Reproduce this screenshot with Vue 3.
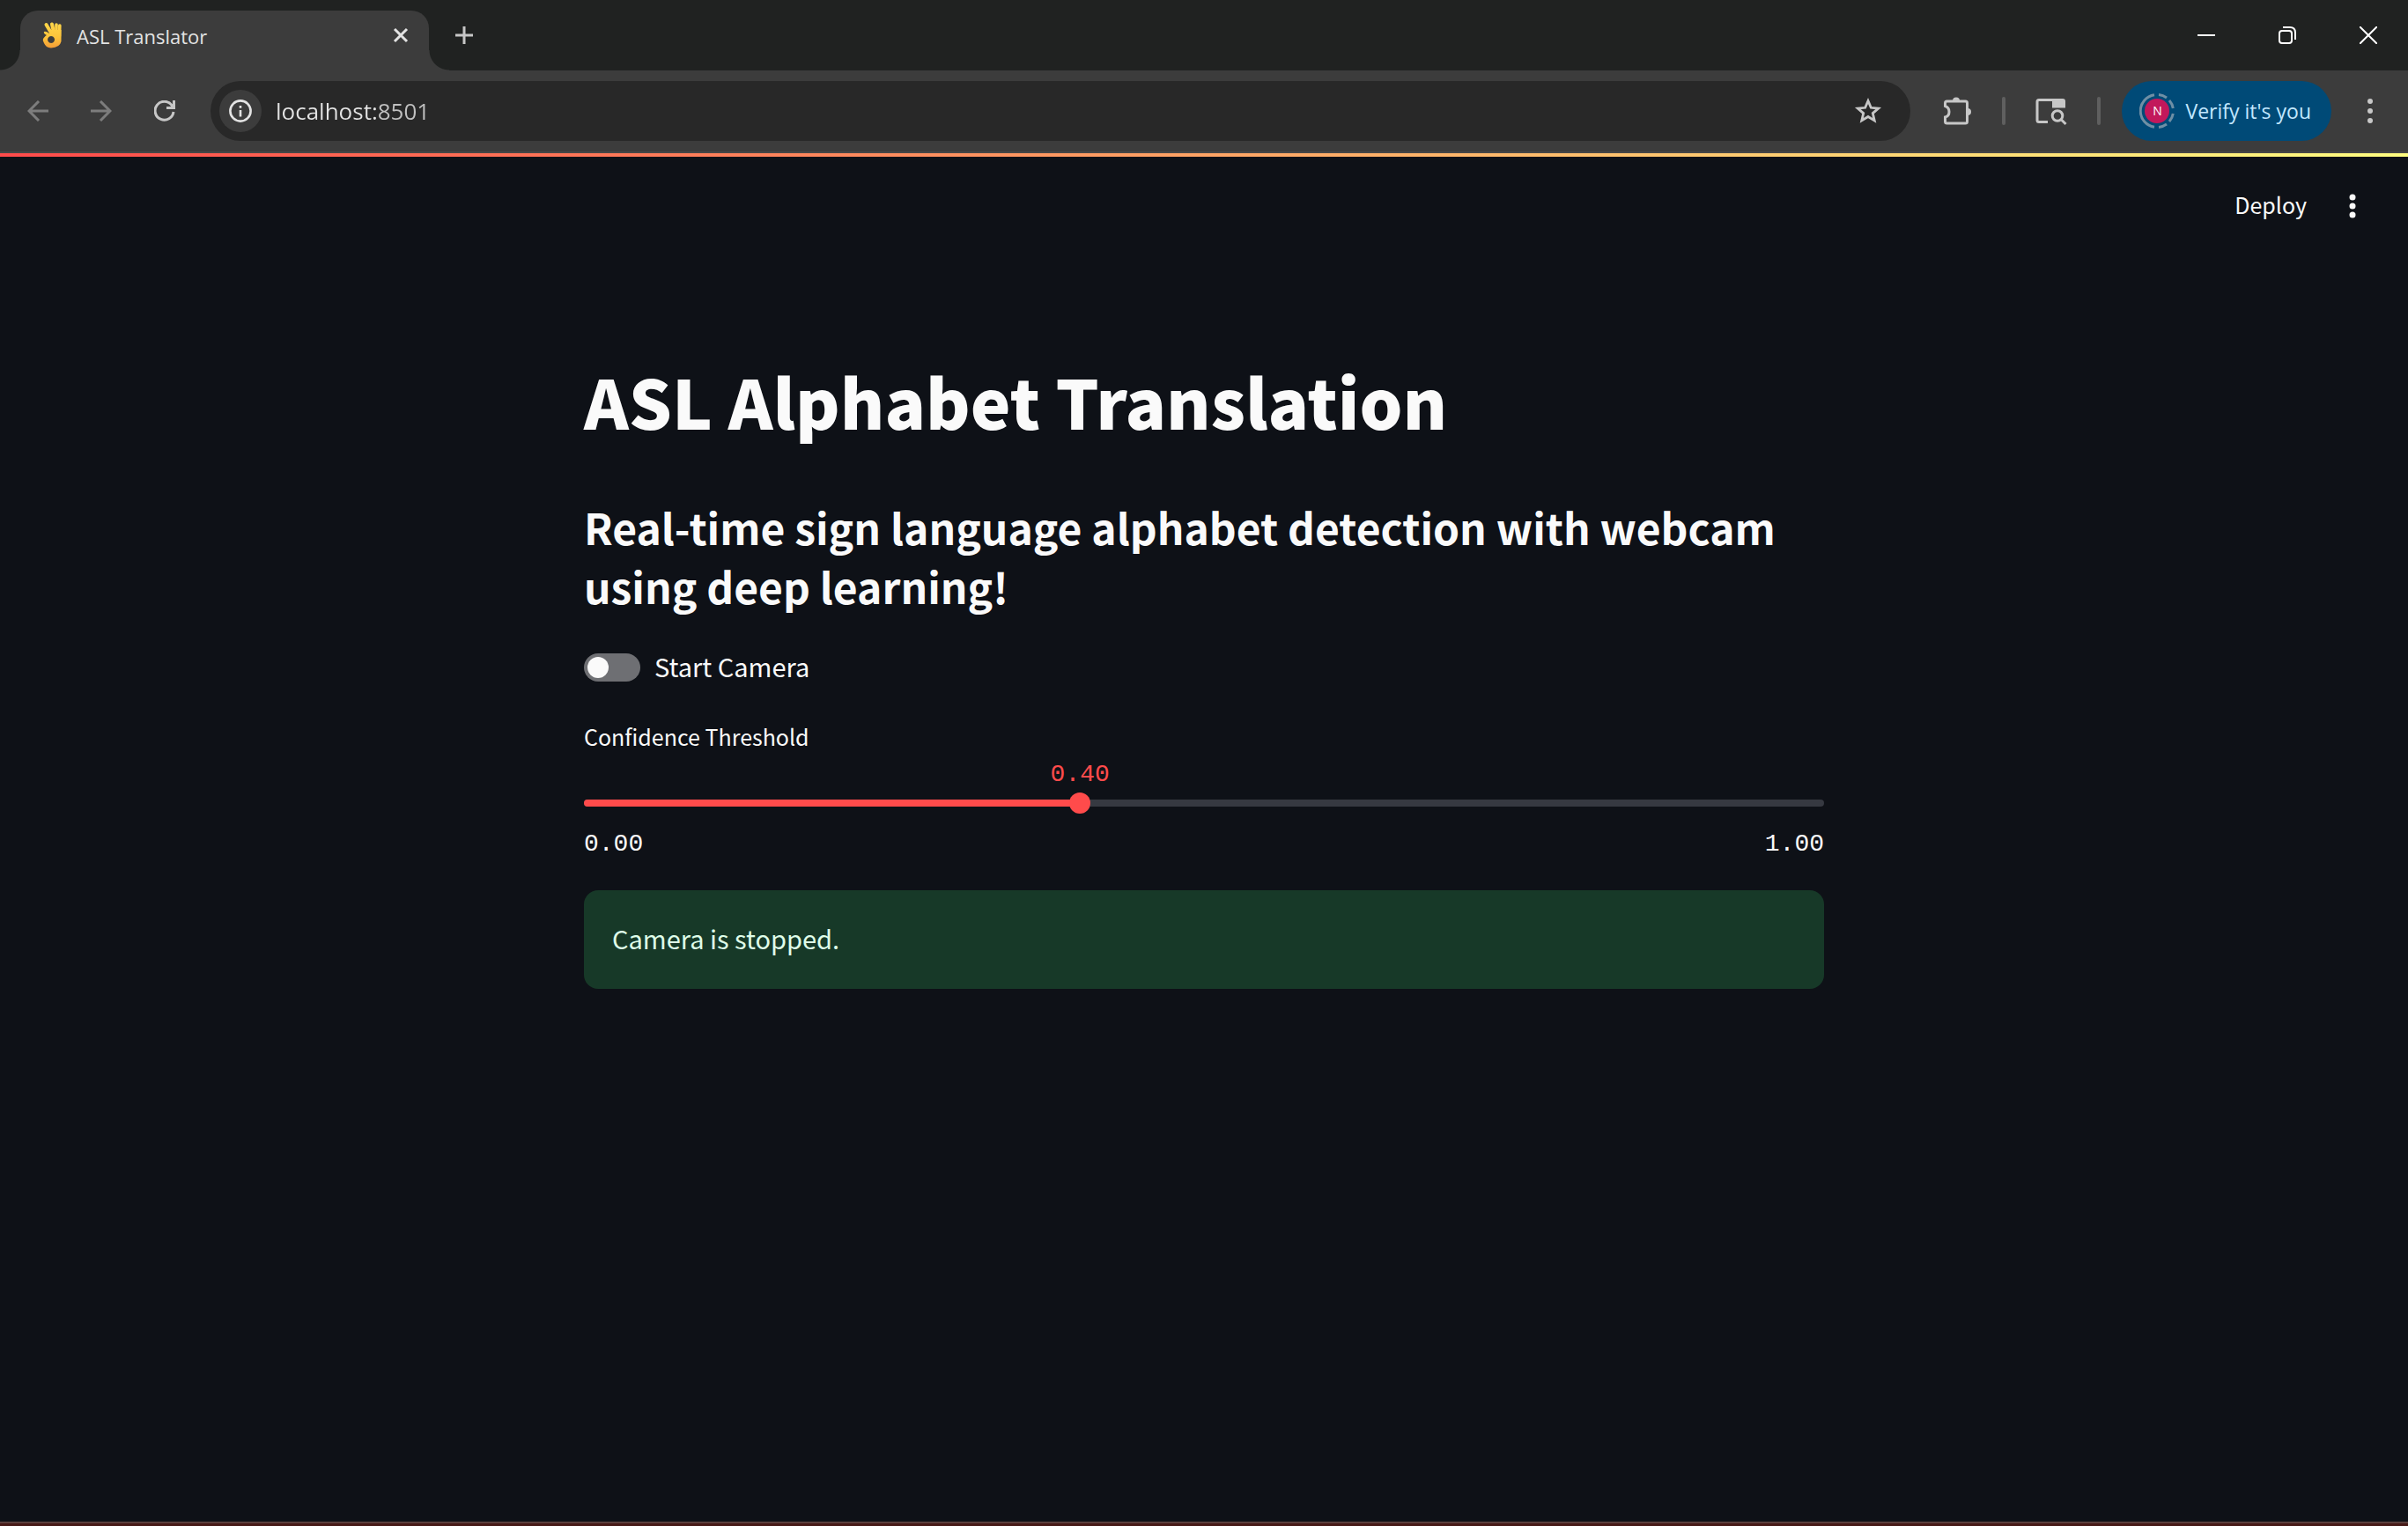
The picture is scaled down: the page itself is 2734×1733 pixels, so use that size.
<script setup>
import { ref, computed } from 'vue'

const url = ref('localhost:8501')
const camera = ref(false)
const threshold = ref(0.4)
const percent = computed(() => threshold.value * 100 + '%')
</script>

<template>
  <div class="window">
    <header class="tabstrip">
      <div class="tab">
        <svg class="favicon" viewBox="0 0 22 30" aria-hidden="true">
          <defs>
            <linearGradient id="skin" gradientUnits="userSpaceOnUse" x1="0" y1="0" x2="0" y2="30">
              <stop offset="0" stop-color="#ffd84a" />
              <stop offset="0.6" stop-color="#fcc23a" />
              <stop offset="1" stop-color="#f39a36" />
            </linearGradient>
          </defs>
          <g fill="none" stroke="url(#skin)" stroke-linecap="round">
            <path d="M4.500 3 L11 14" stroke-width="4" />
            <path d="M11 2.500 L13.500 14" stroke-width="4" />
            <path d="M16 3 L16 14" stroke-width="3.600" />
            <path d="M19.800 4 L19.500 16" stroke-width="3.600" />
          </g>
          <path fill="url(#skin)" fill-rule="evenodd" d="M2 11 Q4 10 8 13 L10 9 H21.500 V22 Q20 29 10 29.500 Q4 29 2 24 Q0 21 1 19 Q4 15 5 15 Q1 13 2 11 Z M10 16 A4 4 0 1 0 10.100 16 Z" />
        </svg>
        <span class="tab-title">ASL Translator</span>
        <button class="plain tab-close" aria-label="Close tab">
          <svg width="18" height="18" viewBox="0 0 18 18"><path d="M2 2 L16 16 M16 2 L2 16" stroke="#e3e3e3" stroke-width="3" /></svg>
        </button>
      </div>
      <button class="plain new-tab" aria-label="New tab">
        <svg width="20" height="20" viewBox="0 0 20 20"><path d="M10 0 V20 M0 10 H20" stroke="#c7c7c7" stroke-width="3" /></svg>
      </button>
      <div class="controls">
        <button class="plain" aria-label="Minimize">
          <svg width="20" height="20" viewBox="0 0 20 20"><path d="M0 10 H20" stroke="#fff" stroke-width="2" /></svg>
        </button>
        <button class="plain" aria-label="Restore">
          <svg width="20" height="20" viewBox="0 0 20 20" fill="none" stroke="#fff" stroke-width="2">
            <rect x="1" y="5" width="14" height="14" rx="3" />
            <path d="M5 1 H13 Q19 1 19 7 V15" />
          </svg>
        </button>
        <button class="plain" aria-label="Close">
          <svg width="20" height="20" viewBox="0 0 20 20"><path d="M0 0 L20 20 M20 0 L0 20" stroke="#fff" stroke-width="2" /></svg>
        </button>
      </div>
    </header>

    <nav class="toolbar">
      <div class="nav">
        <button class="plain" aria-label="Back">
          <svg width="24" height="24" viewBox="0 0 24 24" fill="none" stroke="#7d7d7d" stroke-width="3"><path d="M24 12 H2 M13 1 L2 12 L13 23" /></svg>
        </button>
        <button class="plain" aria-label="Forward">
          <svg width="24" height="24" viewBox="0 0 24 24" fill="none" stroke="#7d7d7d" stroke-width="3"><path d="M0 12 H22 M11 1 L22 12 L11 23" /></svg>
        </button>
        <button class="plain" aria-label="Reload">
          <svg width="24" height="24" viewBox="0 0 24 24" fill="none" stroke="#c7c7c7" stroke-width="3"><path d="M22 13 A10.500 10.500 0 1 1 20 5.500 L22 8 M22.500 0 V8.500 H14" /></svg>
        </button>
      </div>
      <div class="omnibox">
        <button class="plain info" aria-label="Site information">
          <svg width="26" height="26" viewBox="0 0 26 26" fill="none" stroke="#e3e3e3" stroke-width="2.600">
            <circle cx="13" cy="13" r="11.600" /><path d="M13 12 V19.500 M13 7 V9.800" />
          </svg>
        </button>
        <input v-model="url" class="url" type="text" aria-label="Address" />
        <button class="plain" aria-label="Bookmark this tab">
          <svg width="32" height="32" viewBox="0 0 32 32" fill="none" stroke="#c7c7c7" stroke-width="2.800"><path d="M16 4.500 L19.300 12.300 L27.700 13 L21.300 18.600 L23.200 26.900 L16 22.500 L8.800 26.900 L10.700 18.600 L4.300 13 L12.700 12.300 Z" /></svg>
        </button>
      </div>
      <div class="actions">
        <button class="plain" aria-label="Extensions">
          <svg width="34" height="34" viewBox="0 0 34 34">
            <path d="M3.500 11.500 V8 Q3.500 6 5.500 6 H26.500 Q28.500 6 28.500 8 V29 Q28.500 31 26.500 31 H5.500 Q3.500 31 3.500 29 V24 Q8 23 8 18 Q8 13 3.500 11.500 Z" fill="none" stroke="#c7c7c7" stroke-width="3" />
            <path d="M12 5.500 A4 4 0 0 1 20 5.500 Z M29 14 A4 4 0 0 1 29 22 Z" fill="#c7c7c7" />
          </svg>
        </button>
        <span class="divider"></span>
        <button class="plain" aria-label="Search tabs">
          <svg width="36" height="34" viewBox="0 0 36 34" fill="none" stroke="#c7c7c7" stroke-width="3">
            <path d="M14 29.500 H4 Q2 29.500 2 27.500 V6.500 Q2 4.500 4 4.500 H20" />
            <path d="M19 3 H31 Q34 3 34 6 V13.500 H19 Z" fill="#c7c7c7" stroke="none" />
            <circle cx="25" cy="22.500" r="5.800" /><path d="M29 26.500 L34.500 32" />
          </svg>
        </button>
        <span class="divider"></span>
        <button class="profile">
          <span class="avatar">
            <svg viewBox="0 0 40 40" fill="none" stroke="#6f8fa5" stroke-width="3">
              <path d="M17 1.700 A18.500 18.500 0 0 0 17 38.300" />
              <path d="M22 1.600 A18.500 18.500 0 0 1 31 5 M34 8 A18.500 18.500 0 0 1 38.300 17 M38.300 23 A18.500 18.500 0 0 1 34 32 M31 35 A18.500 18.500 0 0 1 22 38.400" />
            </svg>
            <span class="initial">N</span>
          </span>
          Verify it's you
        </button>
        <button class="plain" aria-label="Browser menu">
          <svg width="8" height="32" viewBox="0 0 8 32" fill="#c7c7c7"><circle cx="4" cy="5" r="3" /><circle cx="4" cy="16" r="3" /><circle cx="4" cy="27" r="3" /></svg>
        </button>
      </div>
    </nav>

    <div class="page">
      <div class="page-bar">
        <button class="plain deploy">Deploy</button>
        <button class="plain" aria-label="Main menu">
          <svg width="8" height="32" viewBox="0 0 8 32" fill="#fafafa"><circle cx="4" cy="6" r="3.500" /><circle cx="4" cy="16" r="3.500" /><circle cx="4" cy="26" r="3.500" /></svg>
        </button>
      </div>
      <main class="column">
        <h1>ASL Alphabet Translation</h1>
        <h2>Real-time sign language alphabet detection with webcam using deep learning!</h2>
        <label class="toggle">
          <input v-model="camera" type="checkbox" role="switch" />
          <span>Start Camera</span>
        </label>
        <label class="caption" for="threshold">Confidence Threshold</label>
        <div class="value-row"><output class="value" for="threshold" :style="{ left: percent }">{{ threshold.toFixed(2) }}</output></div>
        <div class="slider">
          <div class="track"><div class="fill" :style="{ width: percent }"></div></div>
          <input id="threshold" v-model.number="threshold" type="range" min="0" max="1" step="0.01" />
        </div>
        <div class="range"><span>0.00</span><span>1.00</span></div>
        <p class="alert" role="status">Camera is stopped.</p>
      </main>
    </div>
    <div class="bottom-edge"></div>
  </div>
</template>

<style>
body {
  background: #0e1117;
}
</style>

<style scoped>
* {
  box-sizing: border-box;
}
svg {
  display: block;
}
.window {
  display: flex;
  flex-direction: column;
  min-height: 100vh;
  background: #0e1117;
  color: #fafafa;
  font-family: "Noto Sans CJK SC", sans-serif;
}
button,
input {
  margin: 0;
  padding: 0;
  border: 0;
  color: inherit;
  font: inherit;
}
.plain {
  background: none;
}
.tabstrip {
  display: flex;
  align-items: center;
  height: 80px;
  padding-left: 23px;
  background: #202221;
  font-family: "Open Sans", sans-serif;
}
.tab {
  position: relative;
  display: flex;
  align-items: center;
  align-self: flex-end;
  width: 464px;
  height: 68px;
  padding: 0 23px 12px 25px;
  border-radius: 20px 20px 0 0;
  background: #3c3c3c;
  color: #e3e3e3;
  font-size: 22px;
}
.tab::before,
.tab::after {
  content: "";
  position: absolute;
  bottom: 0;
  width: 23px;
  height: 23px;
}
.tab::before {
  right: 100%;
  background: radial-gradient(circle at 0 0, #202221 22px, #3c3c3c 23px);
}
.tab::after {
  left: 100%;
  background: radial-gradient(circle at 100% 0, #202221 22px, #3c3c3c 23px);
}
.favicon {
  width: 22px;
  height: 30px;
}
.tab-title {
  flex: 1;
  padding: 2px 0 0 17px;
  line-height: 32px;
}
.new-tab {
  margin-left: 30px;
}
.controls {
  display: flex;
  gap: 72px;
  margin-left: auto;
  padding-right: 35px;
}
.toolbar {
  display: flex;
  align-items: center;
  height: 94px;
  padding: 0 39px 0 31px;
  border-bottom: 2px solid #474747;
  background: #3c3c3c;
  font-family: "Open Sans", sans-serif;
}
.nav {
  display: flex;
  gap: 48px;
  margin-right: 40px;
}
.omnibox {
  display: flex;
  flex: 1;
  align-items: center;
  height: 68px;
  padding: 0 32px 0 10px;
  border-radius: 34px;
  background: #282828;
}
.info {
  display: grid;
  place-items: center;
  width: 48px;
  height: 48px;
  border-radius: 50%;
  background: #3c3c3c;
}
.url {
  flex: 1;
  height: 40px;
  margin-left: 16px;
  background: linear-gradient(90deg, #e3e3e3 116px, #c0c0c0 116px);
  background-clip: text;
  color: transparent;
  font-size: 26px;
}
.actions {
  display: flex;
  align-items: center;
  margin-left: 36px;
}
.divider {
  width: 4px;
  height: 32px;
  margin: 0 34px;
  border-radius: 2px;
  background: #5f5f5f;
}
.divider + .profile {
  margin-left: -10px;
}
.profile {
  display: flex;
  align-items: center;
  gap: 12px;
  height: 68px;
  margin-right: 40px;
  padding: 0 23px 0 20px;
  border-radius: 34px;
  background: #004a77;
  color: #c2e7ff;
  font-size: 23px;
}
.avatar {
  display: grid;
  place-items: center;
  width: 40px;
  height: 40px;
}
.avatar > * {
  grid-area: 1 / 1;
}
.initial {
  width: 28px;
  height: 28px;
  border-radius: 50%;
  background: #c2185b;
  color: #fff;
  font-size: 14px;
  line-height: 28px;
  text-align: center;
}
.page {
  flex: 1;
}
.page::before {
  content: "";
  display: block;
  height: 4px;
  background: linear-gradient(90deg, #ff4b4b, #fffd80);
}
.page-bar {
  display: flex;
  align-items: center;
  justify-content: flex-end;
  gap: 48px;
  height: 112px;
  padding-right: 59px;
}
.deploy {
  padding-bottom: 4px;
  font-size: 25px;
  line-height: 40px;
}
.column {
  width: 1408px;
  max-width: 100%;
  margin: 0 auto;
  padding-top: 112px;
}
h1,
h2,
p {
  margin: 0;
}
h1 {
  font-size: 77px;
  font-weight: 900;
  line-height: 106px;
}
h2 {
  margin-top: 57px;
  font-size: 48px;
  font-weight: 700;
  line-height: 67px;
}
.toggle {
  display: flex;
  align-items: center;
  gap: 16px;
  margin-top: 35px;
  font-size: 29px;
  line-height: 44px;
}
.toggle span {
  padding-bottom: 4px;
}
.toggle input {
  appearance: none;
  width: 64px;
  height: 32px;
  padding: 4px;
  border-radius: 16px;
  background: #6e6f73;
}
.toggle input::before {
  content: "";
  display: block;
  width: 24px;
  height: 24px;
  border-radius: 50%;
  background: #fafafa;
}
.toggle input:checked {
  background: #ff4b4b;
}
.toggle input:checked::before {
  margin-left: 32px;
}
.caption {
  display: block;
  margin-top: 34px;
  font-size: 25px;
  line-height: 40px;
}
.value-row {
  position: relative;
  height: 44px;
}
.value {
  position: absolute;
  top: 8px;
  transform: translateX(-50%);
  color: #ff4b4b;
  font-family: "Liberation Mono", monospace;
  font-size: 28px;
  line-height: 32px;
}
.slider {
  display: grid;
  align-items: center;
  height: 24px;
}
.slider > * {
  grid-area: 1 / 1;
}
.track {
  height: 8px;
  overflow: hidden;
  border-radius: 4px;
  background: #363941;
}
.fill {
  height: 100%;
  background: #ff4b4b;
}
.slider input {
  appearance: none;
  height: 24px;
  margin: 0 -12px;
  background: none;
}
.slider input::-webkit-slider-thumb {
  appearance: none;
  width: 24px;
  height: 24px;
  border-radius: 50%;
  background: #ff4b4b;
}
.range {
  display: flex;
  justify-content: space-between;
  margin-top: 19px;
  font-family: "Liberation Mono", monospace;
  font-size: 28px;
  line-height: 32px;
}
.alert {
  margin-top: 36px;
  padding: 32px 32px 36px;
  border-radius: 16px;
  background: #173928;
  color: #dffde9;
  font-size: 29px;
  line-height: 44px;
}
.bottom-edge {
  height: 5px;
  border-top: 2px solid #5a3f3c;
  background: #471a17;
}
</style>
